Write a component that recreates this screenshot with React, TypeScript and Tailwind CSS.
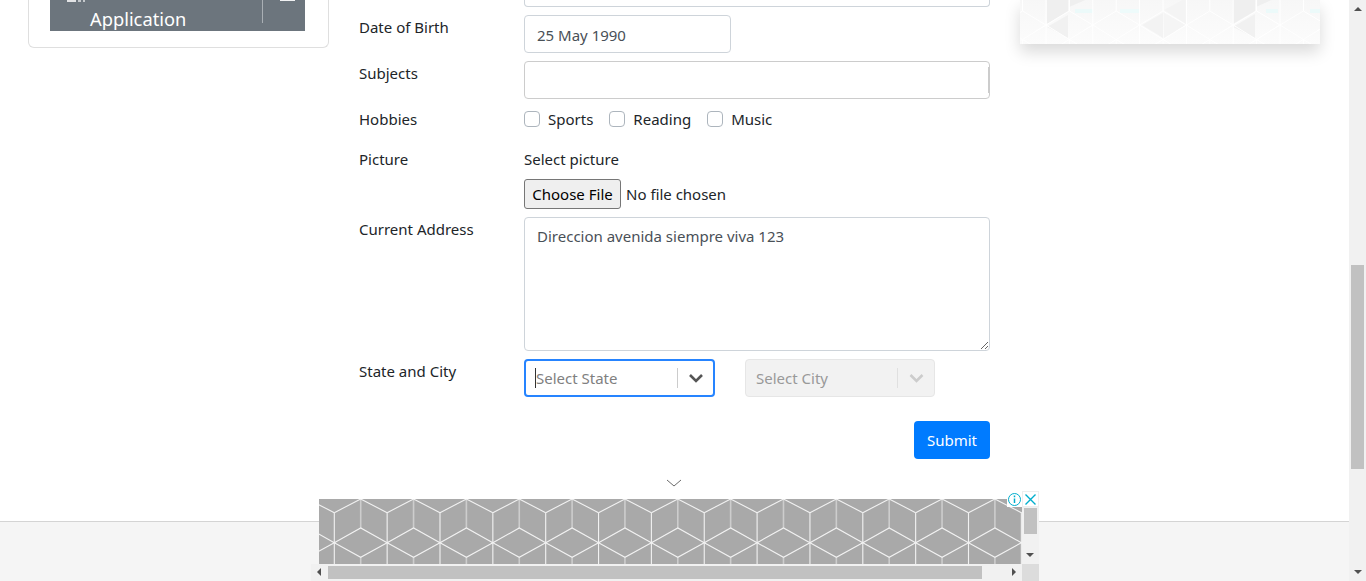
const tiles = Array.from({ length: 15 }, (_, i) => i)

function CubePattern() {
  return (
    <svg width="703" height="65" className="block bg-[#a9a9a9]">
      {tiles.map((i) => (
        <g key={i} transform={`translate(${15.3 + (i - 1) * 52.85} 0)`} fill="none">
          <path d="M26.4 0V29M26.4 58.3V65" stroke="#cdcdcd" strokeWidth="1.6" />
          <path d="M0 13.7L26.4 0L52.85 13.7M0 13.7V65" stroke="#f2f2f2" strokeWidth="1.1" />
          <path d="M0 43.7L26.4 29L52.85 43.7L26.4 58.3Z" stroke="#f2f2f2" strokeWidth="1.1" />
        </g>
      ))}
    </svg>
  )
}

function TrianglePattern() {
  return (
    <svg width="300" height="44" className="block blur-[0.6px]">
      <defs>
        <linearGradient id="fade" x1="0" y1="0" x2="0" y2="1">
          <stop offset="0" stopColor="#f7f7f7" />
          <stop offset="1" stopColor="#fcfcfc" />
        </linearGradient>
      </defs>
      <rect x="-2" y="-2" width="304" height="48" fill="url(#fade)" />
      {/* shaded facets */}
      <path d="M27 -2V24L48 11V-2Z" fill="#efefef" />
      <path d="M27 27L48 15V38Z" fill="#f1f1f1" />
      <path d="M49 -2H70L49 7Z" fill="#efefef" />
      <path d="M122 25L143 13V38Z" fill="#f3f3f3" />
      <path d="M144 13L166 25L144 38Z" fill="#f5f5f5" />
      <path d="M144 10L166 -2V24Z" fill="#f4f4f4" />
      <path d="M213 -2V24L235 11V-2Z" fill="#efefef" />
      <path d="M213 27L235 14V38Z" fill="#f1f1f1" />
      <path d="M236 -2H256L236 7Z" fill="#efefef" />
      {/* faint cyan marks */}
      <rect x="55" y="9" width="18" height="4" fill="#ecfafa" />
      <rect x="100" y="9" width="20" height="4" fill="#eefbfb" />
      <rect x="246" y="9" width="12" height="4" fill="#ecfafa" />
      <rect x="290" y="9" width="10" height="4" fill="#ecfafa" />
      {tiles.slice(0, 8).map((i) => (
        <g key={i} transform={`translate(${26 + (i - 1) * 46.8} 0)`} fill="none" stroke="#ffffff" strokeWidth="1">
          <path d="M0 25L23.4 11L46.8 25L23.4 39.5Z" />
          <path d="M0 0V44M23.4 0V11M23.4 39.5V44" />
          <path d="M23.4 39.5L36 47M23.4 39.5L11 47M0 25L-10 31" />
        </g>
      ))}
    </svg>
  )
}

function Caret({ dir, className }: { dir: 'up' | 'down' | 'left' | 'right'; className?: string }) {
  const pts = { up: '0,4 8,4 4,0', down: '0,0 8,0 4,4', left: '4,0 4,8 0,4', right: '0,0 0,8 4,4' }[dir]
  const vertical = dir === 'up' || dir === 'down'
  return (
    <svg width={vertical ? 8 : 4} height={vertical ? 4 : 8} className={className}>
      <polygon points={pts} fill="#505050" />
    </svg>
  )
}

function Row({ label, children, className }: { label: string; children: React.ReactNode; className?: string }) {
  return (
    <div className={`flex ${className ?? ''}`}>
      <label className="w-[165px] shrink-0 text-[#212529]">{label}</label>
      <div className="flex-1">{children}</div>
    </div>
  )
}

function Check({ label, gap }: { label: string; gap: string }) {
  return (
    <label className={`flex items-center text-[#212529] ${gap}`}>
      <span className="w-4 h-4 rounded-[4px] border border-[#adb5bd] bg-white mr-2" />
      {label}
    </label>
  )
}

function SelectBox({ text, disabled }: { text: string; disabled?: boolean }) {
  if (disabled) {
    return (
      <div className="w-[190px] h-[38px] ml-[30px] flex items-center rounded-[4px] border border-[#e6e6e6] bg-[#f2f2f2]">
        <span className="flex-1 pl-[10px] text-[#999999]">{text}</span>
        <span className="w-px h-5 bg-[#e0e0e0]" />
        <svg width="36" height="20" viewBox="0 0 36 20" fill="none" stroke="#cccccc" strokeWidth="2.6">
          <path d="M12.5 7l6 6 6-6" />
        </svg>
      </div>
    )
  }
  return (
    <div className="w-[191px] h-[38px] flex items-center rounded-[4px] border-2 border-[#2684ff] bg-white">
      <span className="w-px h-5 ml-[9px] bg-[#333333]" />
      <span className="flex-1 text-[#808080]">{text}</span>
      <span className="w-px h-5 bg-[#cccccc]" />
      <svg width="35" height="20" viewBox="0 0 35 20" fill="none" stroke="#555555" strokeWidth="2.6">
        <path d="M12 7l6 6 6-6" />
      </svg>
    </div>
  )
}

export default function App() {
  return (
    <div className="h-[581px] flex overflow-hidden bg-white text-[15px] leading-[24px] font-['Noto_Sans',sans-serif]">
      <div className="relative w-[1349px] h-[581px] overflow-hidden flex flex-col">
        <div className="h-[521px] flex">
          {/* left menu card, scrolled off the top */}
          <div className="w-[329px] pl-[28px] shrink-0">
            <div className="w-[301px] h-[48px] border border-t-0 border-[#dfdfdf] rounded-b-[6px] pl-[21px] pr-[23px]">
              <div className="h-[31px] bg-[#6c757d] flex overflow-hidden text-white">
                <span className="w-[40px] shrink-0">
                  <span className="flex gap-[2px] ml-[17px] w-[18px] h-[2px]">
                    <span className="w-[9px] bg-white/80" />
                    <span className="w-[3px] bg-white/60" />
                    <span className="w-[2px] bg-white/60" />
                  </span>
                </span>
                <span className="flex-1 text-[18.3px] leading-[37px]">Application</span>
                <span className="w-px h-[23px] bg-[#a9afb4]" />
                <span className="w-[42px] shrink-0">
                  <span className="block ml-[17px] w-[15px] h-[1px] bg-white/90" />
                </span>
              </div>
            </div>
          </div>

          {/* form */}
          <div className="w-[661px] pl-[30px] shrink-0">
            <div className="ml-[165px] h-[7px] border border-t-0 border-[#ced4da] rounded-b-[4px]" />
            <Row label="Date of Birth" className="mt-2">
              <input
                readOnly
                value="25 May 1990"
                className="w-[207px] h-[38px] px-[12px] pt-[2px] border border-[#ced4da] rounded-[4px] text-[#495057] outline-none"
              />
            </Row>
            <Row label="Subjects" className="mt-2">
              <div className="h-[38px] border border-[#cccccc] rounded-[4px] flex justify-end items-center">
                <span className="w-px h-[26px] bg-[#cccccc]" />
              </div>
            </Row>
            <Row label="Hobbies" className="mt-2 h-8">
              <div className="flex items-center">
                <Check label="Sports" gap="mr-[16px]" />
                <Check label="Reading" gap="mr-[16px]" />
                <Check label="Music" gap="" />
              </div>
            </Row>
            <Row label="Picture" className="mt-2">
              <div>
                <div className="text-[#212529] h-[25px]">Select picture</div>
                <input
                  type="file"
                  className="block mt-[7px] h-[30px] w-full text-[#212529] file:h-[30px] file:w-[97px] file:mr-[5px] file:border file:border-[#767676] file:rounded-[3px] file:bg-[#efefef] file:text-black"
                />
              </div>
            </Row>
            <Row label="Current Address" className="mt-2">
              <textarea
                readOnly
                value="Direccion avenida siempre viva 123"
                className="block w-full h-[134px] px-[12px] py-[6px] border border-[#ced4da] rounded-[4px] text-[#495057] outline-none"
              />
            </Row>
            <Row label="State and City" className="mt-2">
              <div className="flex">
                <SelectBox text="Select State" />
                <SelectBox text="Select City" disabled />
              </div>
            </Row>
            <div className="flex justify-end mt-6">
              <button className="w-[76px] h-[38px] rounded-[4px] bg-[#007bff] text-white">Submit</button>
            </div>
          </div>

          {/* right ad, scrolled off the top */}
          <div className="ml-[30px] w-[300px] h-[44px] shrink-0 shadow-[0_8px_16px_rgba(0,0,0,0.15)] overflow-hidden">
            <TrianglePattern />
          </div>
        </div>

        <div className="h-[60px] border-t border-[#d4d4d4] bg-[#f5f5f5]" />

        {/* chevron above the anchored ad */}
        <svg width="16" height="9" className="absolute left-[666px] top-[479px]" fill="none" stroke="#6b6b6b">
          <path d="M1 1l7 6 7-6" />
        </svg>

        {/* anchored ad */}
        <div className="absolute left-[311px] top-[491px] w-[728px] h-[90px]">
          <div className="absolute left-[8px] top-[8px]">
            <CubePattern />
          </div>
          <div className="absolute left-[696px] top-0 w-[15px] h-[16px] bg-white flex items-center justify-center">
            <svg width="15" height="15" viewBox="0 0 15 15" fill="none" stroke="#00aecd">
              <circle cx="7.5" cy="7.5" r="6" />
              <path d="M7.5 6.5v4.5M7.5 3.5v1.7" strokeWidth="1.5" />
            </svg>
          </div>
          <div className="absolute left-[711px] top-0 w-[17px] h-[16px] bg-white border border-[#eeeeee] flex items-center justify-center">
            <svg width="13" height="13" viewBox="0 0 13 13" fill="none" stroke="#00aecd" strokeWidth="1.4">
              <path d="M1.5 1.5l10 10M11.5 1.5l-10 10" />
            </svg>
          </div>
          {/* vertical scrollbar */}
          <div className="absolute left-[711px] top-[16px] w-[17px] h-[57px] bg-[#f1f1f1]">
            <div className="mx-[2px] mt-[1px] w-[13px] h-[26px] bg-[#c1c1c1]" />
            <Caret dir="down" className="absolute left-[4px] top-[46px]" />
          </div>
          {/* horizontal scrollbar */}
          <div className="absolute left-0 top-[73px] w-[711px] h-[17px] bg-[#f1f1f1]">
            <Caret dir="left" className="absolute left-[6px] top-[4px]" />
            <div className="absolute left-[17px] top-[2px] w-[654px] h-[13px] bg-[#c1c1c1]" />
            <Caret dir="right" className="absolute left-[701px] top-[4px]" />
          </div>
          <div className="absolute left-[711px] top-[73px] w-[17px] h-[17px] bg-[#dcdcdc]" />
        </div>
      </div>

      {/* page scrollbar */}
      <div className="relative w-[17px] h-[581px] bg-[#f1f1f1]">
        <Caret dir="up" className="absolute left-[5px] top-[7px]" />
        <div className="absolute left-[2px] top-[265px] w-[13px] h-[204px] bg-[#c1c1c1]" />
        <Caret dir="down" className="absolute left-[5px] top-[570px]" />
      </div>
    </div>
  )
}
